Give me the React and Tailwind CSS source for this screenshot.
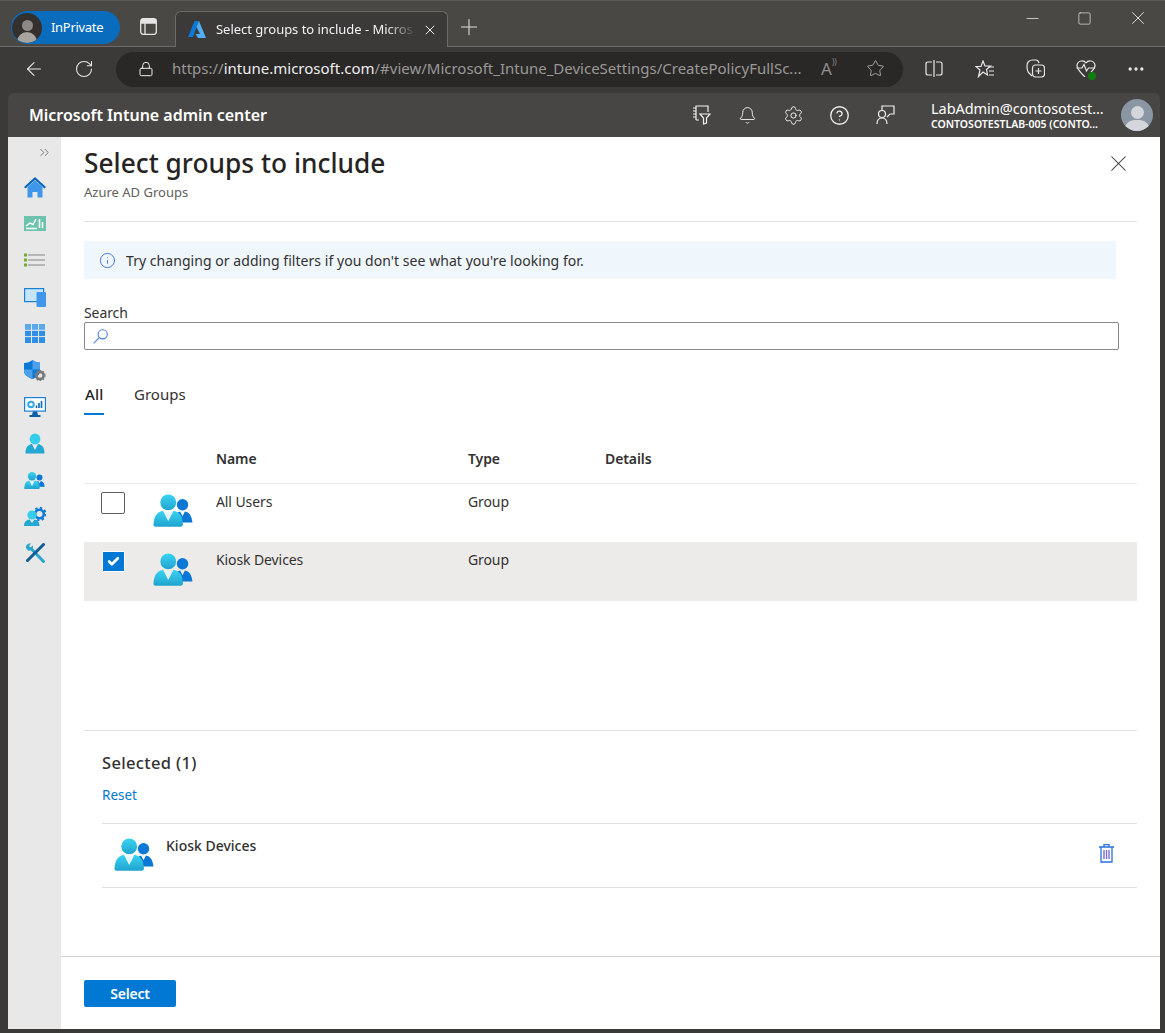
import { ChevronsRight, X, Info, Check, Plus, ArrowLeft, RotateCw, Lock, Star, Bell, Settings, CircleHelp, MoreHorizontal, Minus, Square } from "lucide-react";

function GroupIcon({ className = "w-[42px] h-[34px]" }) {
  return (
    <svg viewBox="0 0 42 34" className={className}>
      <defs>
        <linearGradient id="grp" x1="0" y1="0" x2="0" y2="1">
          <stop offset="0" stopColor="#3ad4f2" />
          <stop offset="1" stopColor="#1fa3cf" />
        </linearGradient>
      </defs>
      <circle cx="31" cy="11" r="6" fill="#0a78d4" />
      <path d="M24 29.5 V22 C24.5 19.5 26.5 18.5 28.5 18 L31 23 L33.5 18 C37.5 18.8 39.5 21 40.5 25 L41.5 29.5 Z" fill="#0a78d4" />
      <circle cx="16" cy="8.5" r="8.3" fill="url(#grp)" />
      <path d="M0.5 32 C0.3 33.2 1.5 34 3 34 H29 C30.5 34 31.5 33 31.5 31.5 C31 24 29 19 21.5 17.2 L16 28 L10.5 17.2 C3 19 1 24 0.5 32 Z" fill="url(#grp)" />
      <path d="M12.5 18 L16 27 L19.5 18 L16 19.5 Z" fill="#dff5fb" />
    </svg>
  );
}

function UserIcon() {
  return (
    <svg viewBox="0 0 20 21" className="w-5 h-[21px]">
      <circle cx="10" cy="6" r="5.4" fill="#35cdec" />
      <path d="M0.5 20.5 C0.5 14 3 11.8 7 11 L10 17 L13 11 C17 11.8 19.5 14 19.5 20.5 Z" fill="#22a8d3" />
    </svg>
  );
}

function NavIcon({ name }) {
  if (name === "home")
    return (
      <svg viewBox="0 0 22 21" className="w-[22px] h-[21px]">
        <path d="M11 0 L22 10 L20.5 11.5 L11 3 L1.5 11.5 L0 10 Z" fill="#0a66b8" />
        <path d="M3.5 10 L11 3.5 L18.5 10 V20.5 H13.5 V15 H8.5 V20.5 H3.5 Z" fill="#3f96ea" />
      </svg>
    );
  if (name === "chart")
    return (
      <svg viewBox="0 0 22 16" className="w-[22px] h-4">
        <rect width="22" height="15" fill="#6dc3ad" />
        <path d="M2 10 L6 7 L9 8.5 L12 3" stroke="#fff" strokeWidth="1.4" fill="none" />
        <path d="M15.5 3 V12 M18.5 6 V12 M2 12.5 H13" stroke="#fff" strokeWidth="1.5" />
      </svg>
    );
  if (name === "list")
    return (
      <svg viewBox="0 0 22 14" className="w-[22px] h-[14px]">
        <path d="M4 2 H21 M4 7 H21 M4 12 H21" stroke="#a5a5a5" strokeWidth="1.5" />
        <rect x="0" y="0.5" width="3" height="3" fill="#72ad2f" />
        <rect x="0" y="5.5" width="3" height="3" fill="#72ad2f" />
        <rect x="0" y="10.5" width="3" height="3" fill="#72ad2f" />
      </svg>
    );
  if (name === "devices")
    return (
      <svg viewBox="0 0 22 19" className="w-[22px] h-[19px]">
        <rect x="0.6" y="0.6" width="19" height="13" fill="#c5e5f8" stroke="#1a7fd8" strokeWidth="1.2" />
        <rect x="12.5" y="4" width="9.5" height="15" rx="1" fill="#3f96ea" />
      </svg>
    );
  if (name === "apps")
    return (
      <svg viewBox="0 0 20 19" className="w-5 h-[19px]">
        <path d="M0 0 H20 V19 H0 Z" fill="#2f8fe6" />
        <path d="M0 0 H20 V6 H0 Z" fill="#5aa9ef" />
        <path d="M6.5 0 V19 M13.5 0 V19 M0 6.3 H20 M0 12.6 H20" stroke="#e8e8e8" strokeWidth="1" />
      </svg>
    );
  if (name === "shield")
    return (
      <svg viewBox="0 0 22 21" className="w-[22px] h-[21px]">
        <path d="M8.5 0 C11 2 13.5 2.5 16 2.5 V11 C16 15 12.5 17.5 8.5 19 C4.5 17.5 0 15 0 11 V3 C3 3 6 2 8.5 0 Z" fill="#0a78d4" />
        <path d="M8.5 0 C11 2 13.5 2.5 16 2.5 V9.5 H8.5 Z M0 9.5 H8.5 V19 C4.5 17.5 0 15 0 11 Z" fill="#4aa0ec" />
        <circle cx="16" cy="15.5" r="3.6" fill="none" stroke="#7a7a7a" strokeWidth="2.6" />
        <circle cx="16" cy="15.5" r="5" fill="none" stroke="#7a7a7a" strokeWidth="1.2" strokeDasharray="1.6 1.6" />
      </svg>
    );
  if (name === "monitor")
    return (
      <svg viewBox="0 0 22 20" className="w-[22px] h-5">
        <rect x="0.6" y="0.6" width="20.8" height="13.5" fill="#fff" stroke="#1a7fd8" strokeWidth="1.2" />
        <circle cx="7" cy="7.5" r="2.8" fill="none" stroke="#35a7e6" strokeWidth="2" />
        <path d="M12.5 11 V8.5 M15 11 V6 M17.5 11 V4" stroke="#0a66b8" strokeWidth="1.6" />
        <path d="M9 14.5 H13 L14 18 H16.5 V20 H5.5 V18 H8 Z" fill="#0a5ea8" />
      </svg>
    );
  if (name === "user") return <UserIcon />;
  if (name === "users") return <GroupIcon className="w-[21px] h-[17px]" />;
  if (name === "tenant")
    return (
      <svg viewBox="0 0 22 19" className="w-[22px] h-[19px]">
        <circle cx="15.5" cy="7" r="4.3" fill="none" stroke="#0a78d4" strokeWidth="2.5" />
        <circle cx="15.5" cy="7" r="6.2" fill="none" stroke="#0a78d4" strokeWidth="1.8" strokeDasharray="2.4 2.4" />
        <circle cx="8" cy="8" r="4.6" fill="#35cdec" />
        <path d="M0 19 C0 15 2.5 13 5.5 12.6 L8 16 L10.5 12.6 C13.5 13 15.5 15 15.5 19 Z" fill="#22a8d3" />
      </svg>
    );
  return (
    <svg viewBox="0 0 20 20" className="w-5 h-5">
      <path d="M6 5.5 L18.5 18.5" stroke="#2aa5cf" strokeWidth="3" strokeLinecap="round" />
      <path d="M18.5 1.5 L2.5 17.5" stroke="#0f5f96" strokeWidth="3" strokeLinecap="round" />
      <path d="M1 5 C0.5 1.5 3.5 0 6 0.5 L4 3 L5.5 4.5 L8 2.5 C8.5 5.5 6 8.5 3 7.5 Z" fill="#2aa5cf" />
    </svg>
  );
}

function EdgeIcon({ children }) {
  return <div className="w-[50px] h-[34px] mb-[2px] flex items-center justify-center text-[#e6e6e6]">{children}</div>;
}

const navItems = ["home", "chart", "list", "devices", "apps", "shield", "monitor", "user", "users", "tenant", "tools"];

export default function App() {
  return (
    <div className="w-[1165px] h-[1033px] bg-[#3b3a39] flex flex-col overflow-hidden text-[#323130] font-['Noto_Sans','Open_Sans',sans-serif]">
      {/* tab strip */}
      <div className="h-[47px] shrink-0 bg-[#4a4845] border-t border-[#5c5a58] border-b border-b-[#6d6b69] flex items-end pl-[11px]">
        <div className="w-[109px] h-[33px] mb-[2px] rounded-full bg-[#0a6cbd] flex items-center">
          <div className="w-[30px] h-[30px] ml-[1px] rounded-full bg-[#33302e] flex flex-col items-center justify-end overflow-hidden">
            <div className="w-[11px] h-[11px] rounded-full bg-[#8d8a86]" />
            <div className="w-[20px] h-[11px] mt-[1px] rounded-t-full bg-[#a8a49f]" />
          </div>
          <span className="ml-[9px] text-[13px] text-white tracking-[-0.3px]">InPrivate</span>
        </div>
        <div className="w-[55px] h-full flex items-center justify-center pl-[1px]">
          <svg viewBox="0 0 17 17" className="w-[17px] h-[17px] mt-[6px]" fill="none" stroke="#e6e6e6" strokeWidth="1.3">
            <rect x="0.7" y="0.7" width="15.6" height="15.6" rx="2.5" />
            <path d="M5 5 V16.3 M1 5 H16" />
            <rect x="1" y="1" width="15" height="4" fill="#e6e6e6" stroke="none" />
          </svg>
        </div>
        <div className="w-[273px] h-[36px] mb-[-1px] bg-[#3b3a39] rounded-t-[6px] border border-b-0 border-[#6d6b69] flex items-center pl-[12px]">
          <svg viewBox="0 0 18 17" className="w-[18px] h-[17px] shrink-0">
            <path d="M6.5 0 H11 L5 16 H0 Z" fill="#0a78d4" />
            <path d="M11 0 L18 17 H10 L7.5 13 H12 L8.5 6 Z" fill="#50aef0" />
          </svg>
          <span className="ml-[10px] w-[200px] shrink-0 whitespace-nowrap text-[13px] text-[#f2f2f2] tracking-[-0.03px] [mask-image:linear-gradient(to_right,black_85%,transparent_100%)]">Select groups to include - Micros</span>
          <X className="ml-[6px] w-4 h-4 shrink-0 text-[#eee]" strokeWidth={1.5} />
        </div>
        <div className="w-[42px] h-full flex items-center justify-center">
          <Plus className="w-[26px] h-[26px] mt-[7px] text-[#dedede]" strokeWidth={1} />
        </div>
        <div className="ml-auto flex h-full text-[#e6e6e6]">
          <div className="w-[52px] flex justify-center pt-[8px]"><Minus className="w-[19px] h-[19px]" strokeWidth={1} /></div>
          <div className="w-[53px] flex justify-center pt-[10px]"><Square className="w-[15px] h-[15px]" strokeWidth={1.1} /></div>
          <div className="w-[54px] flex justify-center pt-[6px]"><X className="w-[22px] h-[22px]" strokeWidth={1} /></div>
        </div>
      </div>

      {/* address bar */}
      <div className="h-[46px] shrink-0 flex items-center pl-[9px] pr-[4px] pb-[1px]">
        <EdgeIcon><ArrowLeft className="w-[22px] h-[22px]" strokeWidth={1.2} /></EdgeIcon>
        <EdgeIcon><RotateCw className="w-[20px] h-[20px]" strokeWidth={1.3} /></EdgeIcon>
        <div className="ml-[7px] w-[787px] shrink-0 h-[35px] rounded-full bg-[#292827] flex items-center pl-[22px]">
          <Lock className="w-[16px] h-[16px] mb-[2px] text-[#eee]" strokeWidth={1.5} />
          <div className="ml-[18px] mb-[2px] w-[640px] shrink-0 whitespace-nowrap text-[15px] text-[#9a9896]">
            https://<span className="text-[#eeeeee]">intune.microsoft.com</span>/#view/Microsoft_Intune_DeviceSettings/CreatePolicyFullSc...
          </div>
          <span className="ml-[9px] mb-[2px] text-[17px] text-[#8f8d8b]">A<span className="text-[8px] align-top">))</span></span>
          <Star className="ml-[29px] mb-[2px] w-[19px] h-[19px] text-[#b5b3b1]" strokeWidth={1.1} />
        </div>
        <div className="ml-[6px] flex flex-1 justify-between text-[#e6e6e6]">
          <EdgeIcon>
            <svg viewBox="0 0 18 17" className="w-[18px] h-[17px]" fill="none" stroke="currentColor" strokeWidth="1.2">
              <path d="M7 2 H3 C1.7 2 1 2.7 1 4 V13 C1 14.3 1.7 15 3 15 H7 M11 2 H15 C16.3 2 17 2.7 17 4 V13 C17 14.3 16.3 15 15 15 H11 M9 0 V17" />
            </svg>
          </EdgeIcon>
          <EdgeIcon>
            <svg viewBox="0 0 20 18" className="w-5 h-[18px]" fill="none" stroke="currentColor" strokeWidth="1.2">
              <path d="M8 1 L10 6 H15.5 L11.5 9.5 L12.5 15 L8 12 L3.5 16.5 L5 10 L0.8 6.5 H6 Z" />
              <path d="M13 7 H19 M14 11 H19 M14 15 H19" />
            </svg>
          </EdgeIcon>
          <EdgeIcon>
            <svg viewBox="0 0 19 19" className="w-[19px] h-[19px]" fill="none" stroke="currentColor" strokeWidth="1.2">
              <path d="M6 17 L3 14 C1 12 1 10 1 7 C1 3 3 1 7 1 H10 C11.5 1 12.5 2 13 4" />
              <rect x="6.5" y="6" width="12" height="12" rx="3" />
              <path d="M12.5 9 V15 M9.5 12 H15.5" />
            </svg>
          </EdgeIcon>
          <div className="relative">
            <EdgeIcon>
              <svg viewBox="0 0 20 17" className="w-5 h-[17px]" fill="none" stroke="currentColor" strokeWidth="1.2">
                <path d="M10 3 C12 0 18 0 19 5 C19.5 8 17 10 15 12 M10 3 C8 0 2 0 1 5 C0.5 8 3 11 7 15 L9 17" />
                <path d="M0.5 8 H6 L8 4.5 L10.5 11 L12.5 8 H19" />
              </svg>
            </EdgeIcon>
            <div className="absolute left-[27px] top-[20px] w-2 h-2 rounded-full bg-[#107c10]" />
          </div>
          <EdgeIcon><MoreHorizontal className="w-[20px] h-[20px]" strokeWidth={2} /></EdgeIcon>
        </div>
      </div>

      {/* portal window */}
      <div className="flex-1 min-h-0 mr-[5px] mb-1 ml-2 flex flex-col">
        <div className="h-[44px] shrink-0 bg-[#484644] rounded-t-[6px] flex items-center pl-[21px]">
          <span className="text-[16px] font-semibold text-white tracking-[-0.03px]">Microsoft Intune admin center</span>
          <div className="ml-auto flex items-center text-[#f0f0f0]">
            <div className="w-[46px] flex justify-center">
              <svg viewBox="0 0 19 20" className="w-[19px] h-5" fill="none" stroke="currentColor" strokeWidth="1.2">
                <path d="M4 15 V1 H16 V7 M1 3 H4 M1 6 H4 M1 9 H4 M1 12 H4 M7 15 H4" />
                <path d="M8 9 H18 L14.5 13 V18 L11.5 19 V13 Z" />
              </svg>
            </div>
            <div className="w-[46px] flex justify-center"><Bell className="w-[19px] h-[19px]" strokeWidth={1.2} /></div>
            <div className="w-[46px] flex justify-center"><Settings className="w-[21px] h-[21px]" strokeWidth={1.1} /></div>
            <div className="w-[46px] flex justify-center"><CircleHelp className="w-[21px] h-[21px]" strokeWidth={1.5} /></div>
            <div className="w-[46px] flex justify-center">
              <svg viewBox="0 0 19 20" className="w-[19px] h-5" fill="none" stroke="currentColor" strokeWidth="1.2">
                <path d="M6 5 V1 H18 V9 H14 L11 12" />
                <circle cx="6" cy="9" r="3.5" />
                <path d="M1 19 C1 15 3 13 6 13 C9 13 11 15 11 19" />
              </svg>
            </div>
          </div>
          <div className="ml-[23px] w-[196px] flex flex-col text-white leading-none">
            <span className="text-[14.5px] whitespace-nowrap tracking-[-0.05px] leading-[17px]">LabAdmin@contosotest...</span>
            <span className="text-[10.5px] font-semibold whitespace-nowrap leading-[14px]">CONTOSOTESTLAB-005 (CONTO...</span>
          </div>
          <div className="ml-[-6px] mr-[7px] w-8 h-8 rounded-full bg-[#8a96a3] flex flex-col items-center justify-end overflow-hidden shrink-0">
            <div className="w-[13px] h-[13px] rounded-full bg-[#d3d7db]" />
            <div className="w-[26px] h-[11px] mt-[1px] rounded-t-full bg-[#d3d7db]" />
          </div>
        </div>

        <div className="flex-1 min-h-0 flex bg-white">
          <div className="w-[53px] shrink-0 bg-[#e8e8e8] flex flex-col items-center">
            <ChevronsRight className="self-end mr-[9px] mt-[8px] w-[15px] h-[15px] text-[#484644]" strokeWidth={1.1} />
            <div className="mt-[9px] flex flex-col">
              {navItems.map((n) => (
                <div key={n} className="h-[36.6px] w-[53px] flex items-center justify-center">
                  <NavIcon name={n} />
                </div>
              ))}
            </div>
          </div>

          <div className="flex-1 min-w-0 flex flex-col">
            <div className="flex-1 min-h-0 pl-[23px] pr-[23px]">
              <div className="h-[85px] border-b border-[#e1dfdd] flex justify-between">
                <div>
                  <h1 className="mt-[7px] text-[26.25px] leading-[38px] font-medium tracking-[0.02px] text-[#252423]">Select groups to include</h1>
                  <p className="mt-[2px] text-[13px] leading-[16px] text-[#605e5c]">Azure AD Groups</p>
                </div>
                <X className="mt-[13px] w-[27px] h-[27px] mr-[5px] text-[#323130]" strokeWidth={0.9} />
              </div>

              <div className="mt-[19px] mr-[21px] h-[38px] bg-[#eff6fc] flex items-center pl-[15px]">
                <Info className="w-[17px] h-[17px] text-[#2f62d8]" strokeWidth={1.2} />
                <span className="ml-[10px] text-[14px] tracking-[0.05px]">Try changing or adding filters if you don't see what you're looking for.</span>
              </div>

              <div className="mt-[24px] text-[14px] leading-[19px] tracking-[-0.1px]">Search</div>
              <div className="mr-[18px] h-[28px] border border-[#8a8886] rounded-[2px] flex items-center pl-[8px]">
                <svg viewBox="0 0 15 15" className="w-[15px] h-[15px]" fill="none">
                  <circle cx="9.7" cy="5.3" r="4.6" stroke="#4a7fdc" strokeWidth="1.1" />
                  <path d="M6.2 8.8 L0.6 14.4" stroke="#6a8fe8" strokeWidth="1.3" />
                </svg>
              </div>

              <div className="mt-[33px] flex text-[15px]">
                <div className="w-[20px] h-[32px] border-b-2 border-[#0078d4] font-medium text-[#252423] whitespace-nowrap pl-[1px] tracking-[0.15px]">All</div>
                <div className="ml-[30px] text-[#323130]">Groups</div>
              </div>

              <div className="mt-[27px] h-[42px] border-b border-[#edebe9] grid grid-cols-[132px_252px_137px_1fr] text-[14px] font-semibold tracking-[-0.1px] items-start pt-[6px]">
                <span className="col-start-2">Name</span>
                <span>Type</span>
                <span>Details</span>
              </div>

              <div className="h-[58px] grid grid-cols-[132px_252px_137px_1fr] text-[14px] tracking-[-0.1px]">
                <div className="flex items-start pl-[17px] pt-[8px]">
                  <div className="w-6 h-[22px] rounded-[2px] border border-[#605e5c]" />
                  <GroupIcon className="ml-[28px] mt-[2px] w-[40px] h-[33px] shrink-0" />
                </div>
                <span className="pt-[7px]">All Users</span>
                <span className="pt-[7px]">Group</span>
              </div>

              <div className="h-[59px] bg-[#edebe9] grid grid-cols-[132px_252px_137px_1fr] text-[14px] tracking-[-0.1px]">
                <div className="flex items-start pl-[18px] pt-[9px]">
                  <div className="w-[23px] h-[21px] rounded-[1px] bg-[#0078d4] border border-white flex items-center justify-center">
                    <Check className="w-[13px] h-[13px] text-white" strokeWidth={5} />
                  </div>
                  <GroupIcon className="ml-[28px] mt-[2px] w-[40px] h-[33px] shrink-0" />
                </div>
                <span className="pt-[7px]">Kiosk Devices</span>
                <span className="pt-[7px]">Group</span>
              </div>

              <div className="mt-[129px] border-t border-[#e1dfdd] pl-[18px]">
                <h2 className="mt-[19px] text-[16.5px] leading-[26px] font-medium tracking-[0.35px] text-[#323130]">Selected (1)</h2>
                <button className="block mt-[10px] text-[13.5px] leading-[18px] text-[#0078d4]">Reset</button>
                <div className="mt-[19px] h-[65px] border-y border-[#e1dfdd] flex items-start">
                  <GroupIcon className="ml-[12px] mt-[14px] w-[40px] h-[33px] shrink-0" />
                  <span className="ml-[12px] mt-[12px] text-[14px] leading-[19px] font-medium">Kiosk Devices</span>
                  <svg viewBox="0 0 15 19" className="ml-auto mr-[23px] mt-[20px] w-[15px] h-[19px]" fill="none" stroke="#2a6fe0" strokeWidth="1.3">
                    <path d="M0 3 H15 M5 3 V0.7 H10 V3 M2 3 V18 H13 V3" />
                    <path d="M5 6 V15 M7.5 6 V15 M10 6 V15" stroke="#7f6fd0" strokeWidth="1.4" />
                  </svg>
                </div>
              </div>
            </div>

            <div className="h-[73px] shrink-0 border-t border-[#d2d0ce] pl-[23px] pt-[23px]">
              <button className="w-[92px] h-[27px] bg-[#0078d4] rounded-[2px] text-white text-[14px] font-semibold tracking-[-0.2px]">Select</button>
            </div>
          </div>
        </div>
      </div>
    </div>
  );
}
